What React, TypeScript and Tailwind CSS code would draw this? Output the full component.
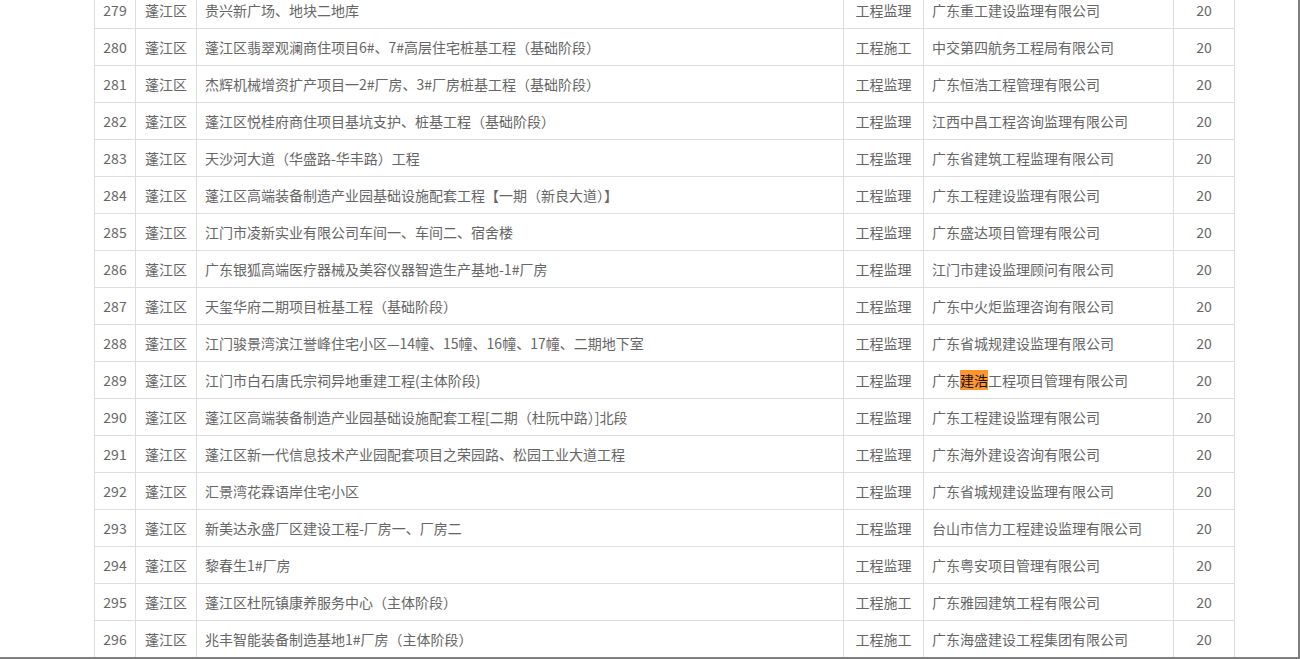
import React from "react";

const rows: [string, string, string, string, string][] = [
  ["279", "蓬江区", "贵兴新广场、地块二地库", "工程监理", "广东重工建设监理有限公司"],
  ["280", "蓬江区", "蓬江区翡翠观澜商住项目6#、7#高层住宅桩基工程（基础阶段）", "工程施工", "中交第四航务工程局有限公司"],
  ["281", "蓬江区", "杰辉机械增资扩产项目一2#厂房、3#厂房桩基工程（基础阶段）", "工程监理", "广东恒浩工程管理有限公司"],
  ["282", "蓬江区", "蓬江区悦桂府商住项目基坑支护、桩基工程（基础阶段）", "工程监理", "江西中昌工程咨询监理有限公司"],
  ["283", "蓬江区", "天沙河大道（华盛路-华丰路）工程", "工程监理", "广东省建筑工程监理有限公司"],
  ["284", "蓬江区", "蓬江区高端装备制造产业园基础设施配套工程【一期（新良大道）】", "工程监理", "广东工程建设监理有限公司"],
  ["285", "蓬江区", "江门市凌新实业有限公司车间一、车间二、宿舍楼", "工程监理", "广东盛达项目管理有限公司"],
  ["286", "蓬江区", "广东银狐高端医疗器械及美容仪器智造生产基地-1#厂房", "工程监理", "江门市建设监理顾问有限公司"],
  ["287", "蓬江区", "天玺华府二期项目桩基工程（基础阶段）", "工程监理", "广东中火炬监理咨询有限公司"],
  ["288", "蓬江区", "江门骏景湾滨江誉峰住宅小区—14幢、15幢、16幢、17幢、二期地下室", "工程监理", "广东省城规建设监理有限公司"],
  ["289", "蓬江区", "江门市白石唐氏宗祠异地重建工程(主体阶段)", "工程监理", "HL"],
  ["290", "蓬江区", "蓬江区高端装备制造产业园基础设施配套工程[二期（杜阮中路）]北段", "工程监理", "广东工程建设监理有限公司"],
  ["291", "蓬江区", "蓬江区新一代信息技术产业园配套项目之荣园路、松园工业大道工程", "工程监理", "广东海外建设咨询有限公司"],
  ["292", "蓬江区", "汇景湾花霖语岸住宅小区", "工程监理", "广东省城规建设监理有限公司"],
  ["293", "蓬江区", "新美达永盛厂区建设工程-厂房一、厂房二", "工程监理", "台山市信力工程建设监理有限公司"],
  ["294", "蓬江区", "黎春生1#厂房", "工程监理", "广东粤安项目管理有限公司"],
  ["295", "蓬江区", "蓬江区杜阮镇康养服务中心（主体阶段）", "工程施工", "广东雅园建筑工程有限公司"],
  ["296", "蓬江区", "兆丰智能装备制造基地1#厂房（主体阶段）", "工程施工", "广东海盛建设工程集团有限公司"],
];

export default function App() {
  const cell = "border border-[#dddddd] h-[37px] p-0 align-middle";
  return (
    <div
      className="w-[1300px] h-[659px] overflow-hidden bg-white border-r-2 border-b-2 border-[#7f7f7f] box-border"
      style={{ fontFamily: '"Noto Sans CJK SC", "Noto Sans", sans-serif' }}
    >
      <div className="pl-[94px] -mt-[9px]">
        <table className="border-collapse table-fixed w-[1140px] text-[14px] leading-[20px] text-[#666666]">
          <colgroup>
            <col className="w-[41px]" />
            <col className="w-[61px]" />
            <col className="w-[647px]" />
            <col className="w-[80px]" />
            <col className="w-[250px]" />
            <col className="w-[61px]" />
          </colgroup>
          <tbody>
            {rows.map((r) => (
              <tr key={r[0]}>
                <td className={`${cell} text-center`}>{r[0]}</td>
                <td className={`${cell} text-center`}>{r[1]}</td>
                <td className={`${cell} pl-[8px] whitespace-nowrap`}>{r[2]}</td>
                <td className={`${cell} text-center`}>{r[3]}</td>
                <td className={`${cell} pl-[8px] whitespace-nowrap`}>
                  {r[4] === "HL" ? (
                    <>
                      广东<span className="bg-[#ff9632] text-[#111111]">建浩</span>工程项目管理有限公司
                    </>
                  ) : (
                    r[4]
                  )}
                </td>
                <td className={`${cell} text-center`}>20</td>
              </tr>
            ))}
          </tbody>
        </table>
      </div>
    </div>
  );
}
